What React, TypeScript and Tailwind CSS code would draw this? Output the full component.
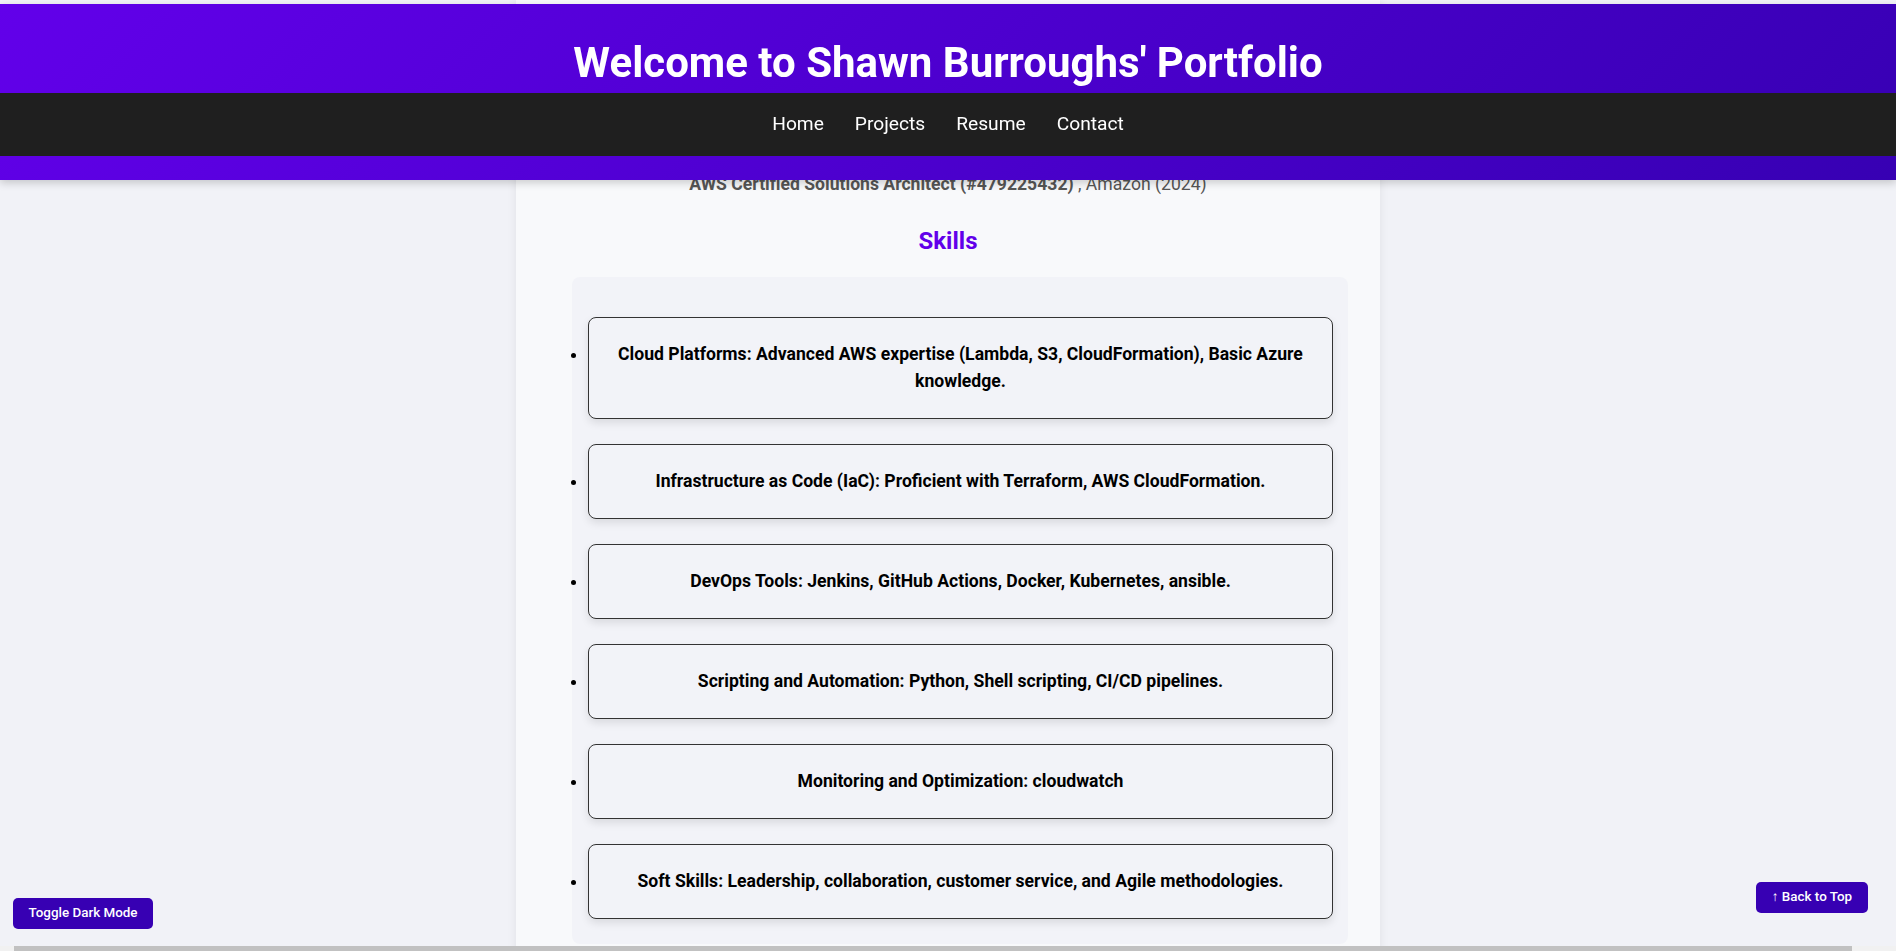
import React from 'react'

const skills = [
  'Cloud Platforms: Advanced AWS expertise (Lambda, S3, CloudFormation), Basic Azure knowledge.',
  'Infrastructure as Code (IaC): Proficient with Terraform, AWS CloudFormation.',
  'DevOps Tools: Jenkins, GitHub Actions, Docker, Kubernetes, ansible.',
  'Scripting and Automation: Python, Shell scripting, CI/CD pipelines.',
  'Monitoring and Optimization: cloudwatch',
  'Soft Skills: Leadership, collaboration, customer service, and Agile methodologies.',
]

const navLinks = ['Home', 'Projects', 'Resume', 'Contact']

export default function App() {
  return (
    <div className="h-screen overflow-hidden bg-[#f1f2f7] font-['Roboto','Liberation_Sans',sans-serif] text-[#222]">
      <header className="fixed top-[4px] inset-x-0 z-20 bg-[linear-gradient(135deg,#6200ea,#3700b3)] shadow-[0_3px_8px_rgba(0,0,0,0.18)]">
        <div className="h-[89px] pt-[38px] text-center">
          <h1 className="text-[42px] leading-none font-bold text-white">Welcome to Shawn Burroughs' Portfolio</h1>
        </div>
        <nav className="h-[63px] bg-[#1f1f1f] flex items-center justify-center gap-[31px]">
          {navLinks.map(link => (
            <a key={link} href="#" className="text-[19.2px] text-white">
              {link}
            </a>
          ))}
        </nav>
        <div className="h-[24px]" />
      </header>

      {/* Main card */}
      <main className="flex justify-center">
        <section className="w-[864px] bg-[#f8f9fb] shadow-[0_0_10px_rgba(0,0,0,0.07)] pt-[171px] px-[32px] pb-10">
          <p className="text-center text-[17.6px] leading-[27px] text-[#555]">
            <strong>AWS Certified Solutions Architect (#479225432)</strong> , Amazon (2024)
          </p>

          <h3 className="mt-[29px] text-center text-[24px] leading-[29px] font-bold text-[#6200ea]">Skills</h3>

          <ul className="mt-[21px] ml-[24px] list-disc bg-[#f2f3f8] rounded-lg pl-[16px] pr-[15px] pt-[40px] pb-[25px] space-y-[25px]">
            {skills.map(skill => (
              <li
                key={skill}
                className="border border-[#333] rounded-lg bg-[#f2f3f8] px-[20px] py-[23px] text-center text-[17.6px] leading-[27px] font-bold text-black shadow-[0_4px_8px_rgba(0,0,0,0.1)]"
              >
                {skill}
              </li>
            ))}
          </ul>
        </section>
      </main>

      {/* Floating buttons */}
      <button className="fixed left-[13px] bottom-[22px] z-30 h-[31px] w-[140px] rounded-[5px] bg-[#3700b3] text-[13.4px] font-medium text-white">
        Toggle Dark Mode
      </button>
      <button className="fixed right-[28px] bottom-[38px] z-30 h-[31px] w-[112px] rounded-[5px] bg-[#3700b3] text-[13.4px] font-medium text-white">
        ↑ Back to Top
      </button>

      {/* Horizontal scrollbar strip */}
      <div className="fixed bottom-0 inset-x-0 z-30 h-[5px] bg-[#f1f1f1] pl-[14px] pr-[44px]">
        <div className="h-full bg-[#c1c1c1]" />
      </div>
    </div>
  )
}
